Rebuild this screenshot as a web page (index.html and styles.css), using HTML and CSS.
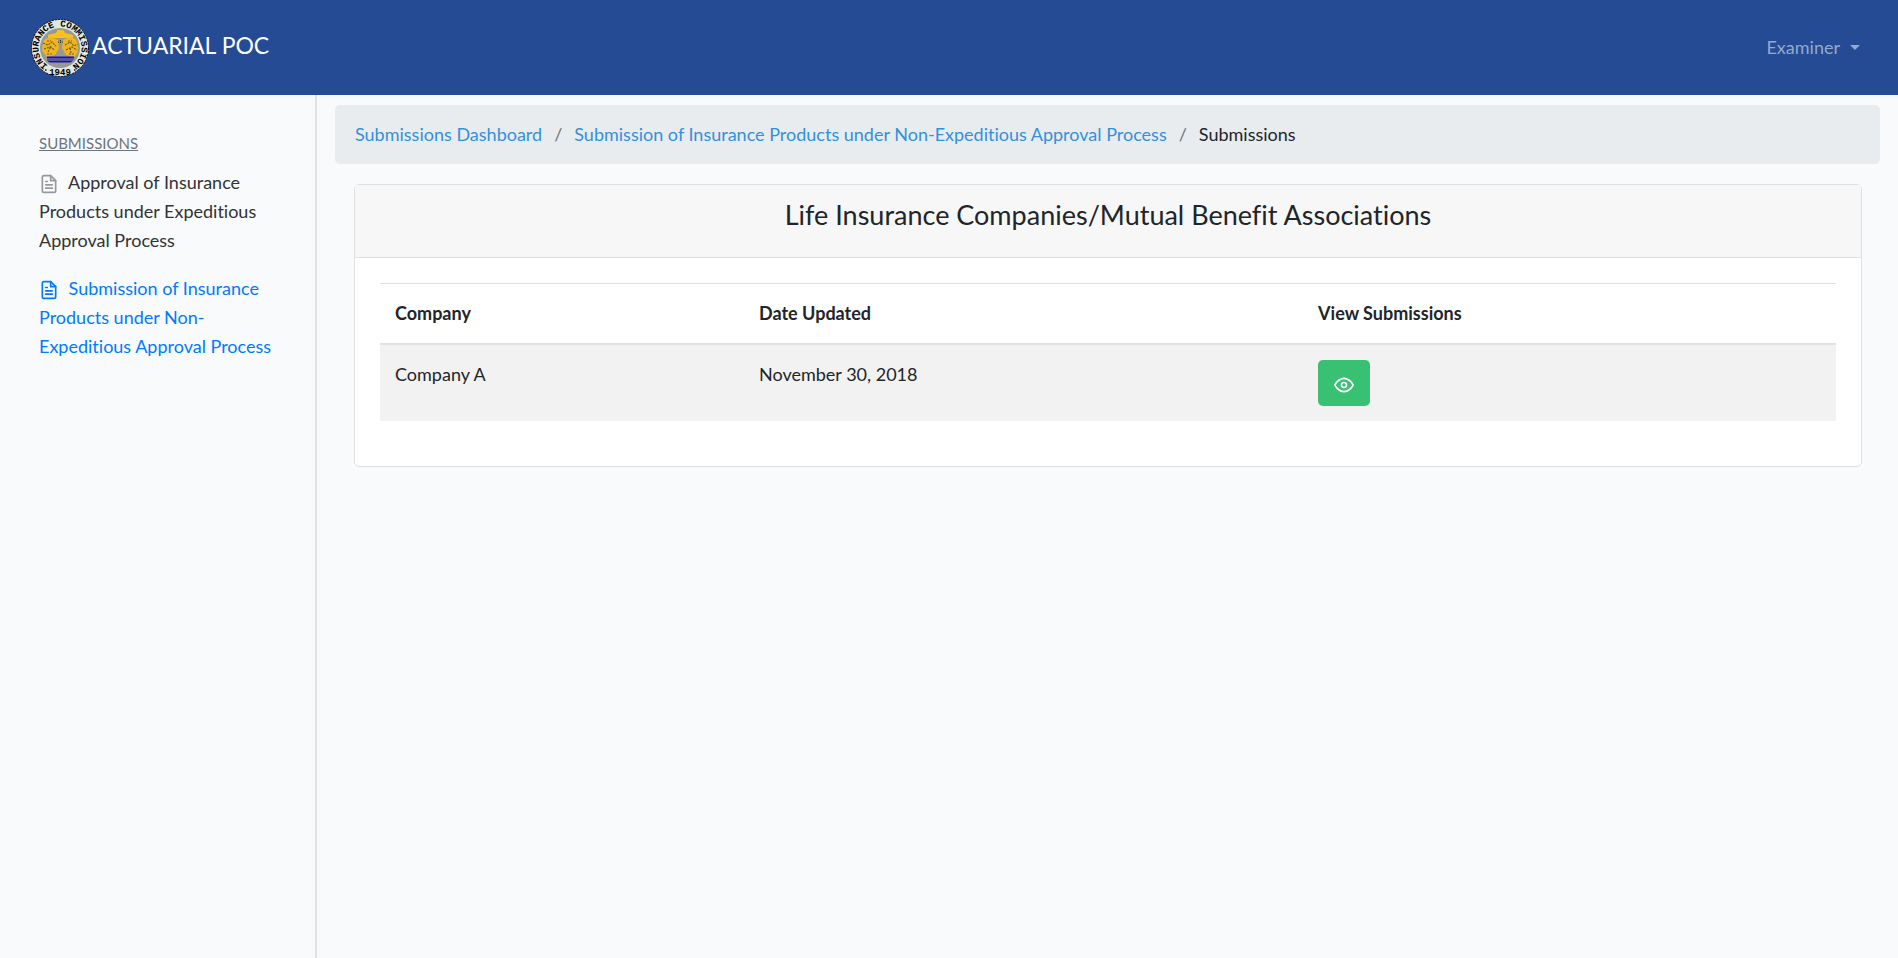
FILE: index.html
```html
<!DOCTYPE html>
<html lang="en">
<head>
<meta charset="utf-8">
<title>Actuarial POC</title>
<link rel="stylesheet" href="styles.css">
</head>
<body>
<svg class="sprite" aria-hidden="true">
  <symbol id="file-text" viewBox="0 0 24 24">
    <path d="M14 2H6a2 2 0 0 0-2 2v16a2 2 0 0 0 2 2h12a2 2 0 0 0 2-2V8z"/>
    <path d="M14 2v6h6M16 13H8M16 17H8M10 9H8"/>
  </symbol>
</svg>
<header class="navbar">
  <a class="brand" href="#">
    <svg class="seal" viewBox="0 0 60 60" aria-hidden="true">
      <defs>
        <path id="ring" d="M17.100 47.200A21.500 21.500 0 1 1 42.900 47.200"/>
        <clipPath id="core"><circle cx="30" cy="30" r="18"/></clipPath>
      </defs>
      <circle cx="30" cy="30" r="28.500" fill="#e2e6de" stroke="#111" stroke-width="1" stroke-dasharray="2 1"/>
      <circle cx="30" cy="30" r="20" fill="#959b94"/>
      <g clip-path="url(#core)">
        <path d="M18 17l8-2 2-4h5l2 4 8 2v3H18z" fill="#fcc01e"/>
        <path d="M13 22l8-3 7 3 1 8-4 7-8 2-5-6zM48 22l-8-3-7 3-1 8 4 7 8 2 5-6z" fill="#f2b41b"/>
        <path d="M13 25l5 2 4-3 4 4M14 31l6-2 5 3M18 34l3-6M35 27l5-3 4 4 4-2M36 32l6-3 5 3M41 35l-1-6M17 23h4M38 23h4M17 36h5M39 36h5" fill="none" stroke="#70602a" stroke-width="1.200" stroke-dasharray="2 1"/>
        <path d="M28 24h5M30.500 22v3" stroke="#333" stroke-width="1" stroke-dasharray="1 1"/>
        <path d="M17 39.500h27M17 43.500h27" stroke="#1a10b4" stroke-width="2.200"/>
        <path d="M17 41.500h27" stroke="#555c70" stroke-width="1"/>
      </g>
      <text class="seal-text"><textPath href="#ring" startOffset="50%" text-anchor="middle">INSURANCE COMMISSION</textPath></text>
      <text class="seal-text" x="30" y="57" text-anchor="middle">1949</text>
      <path d="M15 52h1.500M44 52h1.500" stroke="#111" stroke-width="1.500"/>
    </svg>
    <span class="brand-name">ACTUARIAL POC</span>
  </a>
  <button class="user-menu" type="button">Examiner</button>
</header>
<div class="layout">
  <nav class="sidebar" aria-label="Submissions">
    <h2 class="sidebar-title">SUBMISSIONS</h2>
    <a class="side-link" href="#"><svg class="icon" aria-hidden="true"><use href="#file-text"/></svg> Approval of Insurance Products under Expeditious Approval Process</a>
    <a class="side-link active" href="#"><svg class="icon" aria-hidden="true"><use href="#file-text"/></svg> Submission of Insurance Products under Non-Expeditious Approval Process</a>
  </nav>
  <main class="content">
    <nav aria-label="Breadcrumb">
      <ol class="breadcrumb">
        <li><a href="#">Submissions Dashboard</a></li>
        <li><a href="#">Submission of Insurance Products under Non-Expeditious Approval Process</a></li>
        <li aria-current="page">Submissions</li>
      </ol>
    </nav>
    <section class="card">
      <div class="card-header"><h1>Life Insurance Companies/Mutual Benefit Associations</h1></div>
      <div class="card-body">
        <table class="table">
          <colgroup><col class="col-company"><col class="col-date"><col></colgroup>
          <thead><tr><th scope="col">Company</th><th scope="col">Date Updated</th><th scope="col">View Submissions</th></tr></thead>
          <tbody><tr><td>Company A</td><td>November 30, 2018</td><td>
            <button class="view" type="button" aria-label="View submissions"><svg class="eye" viewBox="0 0 24 24" aria-hidden="true"><path d="M1 12s4-8 11-8 11 8 11 8-4 8-11 8-11-8-11-8z"/><circle cx="12" cy="12" r="3"/></svg></button>
          </td></tr></tbody>
        </table>
      </div>
    </section>
  </main>
</div>
</body>
</html>
```
FILE: styles.css
```css
* { box-sizing: border-box; }
body {
  margin: 0;
  min-height: 100vh;
  display: flex;
  flex-direction: column;
  background: #f8fafc;
  color: #212529;
  font: 18px/29px Lato, sans-serif;
  font-variant-ligatures: no-common-ligatures;
}
a { color: #3490dc; text-decoration: none; }
button { font: inherit; border: 0; cursor: pointer; }
.sprite { display: none; }

.navbar {
  display: flex;
  align-items: center;
  justify-content: space-between;
  height: 95px;
  padding: 0 38px 0 30px;
  background: #244b93;
}
.brand { display: flex; align-items: center; gap: 2px; color: #fff; font-size: 23px; }
.brand-name { padding-bottom: 4px; }
.seal { width: 60px; height: 60px; overflow: visible; }
.seal-text { font: bold 9px "Liberation Mono", monospace; fill: #000; }
.user-menu {
  display: flex;
  align-items: center;
  gap: 10px;
  padding: 0;
  background: none;
  color: #94a9cd;
}
.user-menu::after {
  content: "";
  border: 5px solid transparent;
  border-top-color: currentColor;
  border-bottom: 0;
}

.layout { flex: 1; display: flex; }
.sidebar {
  width: 317px;
  flex: none;
  padding: 34px 34px 0 39px;
  border-right: 2px solid #dee2e6;
}
.sidebar-title {
  margin: 0 0 10px;
  color: #6c757d;
  font-size: 15px;
  font-weight: 400;
  text-decoration: underline;
}
.side-link { display: block; margin-bottom: 19px; color: #333; }
.side-link.active { color: #007bff; }
.icon {
  width: 20px;
  height: 20px;
  margin-right: 5px;
  vertical-align: -5px;
  fill: none;
  stroke: #999;
  stroke-width: 2;
  stroke-linecap: round;
  stroke-linejoin: round;
}
.active .icon { stroke: currentColor; }

.content { flex: 1; min-width: 0; padding: 10px 18px; }
.breadcrumb {
  display: flex;
  flex-wrap: wrap;
  margin: 0 0 20px;
  padding: 15px 20px;
  list-style: none;
  border-radius: 5px;
  background: #e9ecef;
}
.breadcrumb li + li::before { content: "/"; padding: 0 12px; color: #6c757d; }

.card { margin: 0 18px 0 19px; border: 1px solid #dee0e2; border-radius: 5px; background: #fff; }
.card-header { padding: 13px 25px 25px; border-bottom: 1px solid #dee0e2; background: #f7f7f7; text-align: center; }
.card-header h1 { margin: 0; font-size: 27px; line-height: 34px; font-weight: 400; }
.card-body { padding: 25px 25px 45px; }
.table { width: 100%; border-collapse: separate; border-spacing: 0; table-layout: fixed; }
.col-company { width: 25%; }
.col-date { width: 38.4%; }
.table th { padding: 15px; border-top: 1px solid #dee2e6; border-bottom: 2px solid #dee2e6; text-align: left; }
.table td { padding: 15px; vertical-align: top; background: #f2f2f2; }
.view { display: grid; place-items: center; width: 52px; height: 46px; padding: 3px 0 0; border-radius: 5px; background: #38c172; }
.eye { width: 20px; height: 20px; fill: none; stroke: #fff; stroke-width: 2; }
```
